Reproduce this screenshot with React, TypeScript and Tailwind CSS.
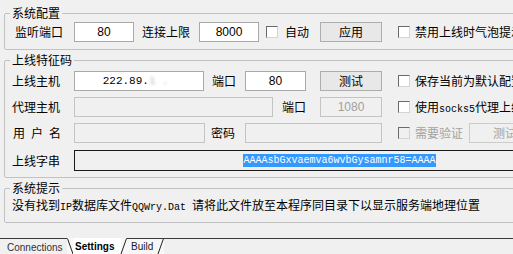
import React from 'react';

const cjk = '"Noto Sans CJK SC", "Liberation Sans", sans-serif';
const mono = '"Liberation Mono", "Noto Sans CJK SC", monospace';
const sans = '"Liberation Sans", Arial, sans-serif';

interface CheckProps {
  disabled?: boolean;
}

const Check: React.FC<CheckProps> = ({ disabled }) => (
  <span
    className={`block w-[12px] h-[12px] shrink-0 border border-t-[#6a6a6a] border-l-[#6a6a6a] border-r-[#d4d4d4] border-b-[#d4d4d4] ${
      disabled ? 'bg-[#f0f0f0]' : 'bg-white'
    }`}
  />
);

interface BoxProps {
  title: string;
  className?: string;
  children: React.ReactNode;
}

const GroupBox: React.FC<BoxProps> = ({ title, className = '', children }) => (
  <fieldset className={`ml-[4px] w-[600px] border border-[#c2c2c2] rounded-[2px] pl-[5px] ${className}`}>
    <legend className="px-[2px] text-[12px] leading-[16px] text-black">{title}</legend>
    {children}
  </fieldset>
);

const Field: React.FC<{ w: string; value?: string; disabled?: boolean }> = ({ w, value, disabled }) => (
  <div
    className={`${w} h-[20px] shrink-0 border flex items-center justify-center text-[12px] ${
      disabled ? 'bg-[#f0f0f0] border-[#c4c4c4] text-[#a0a0a0]' : 'bg-white border-[#a9a9a9] text-black'
    }`}
    style={{ fontFamily: sans }}
  >
    {value}
  </div>
);

const Btn: React.FC<{ w: string; label: string; disabled?: boolean; className?: string }> = ({ w, label, disabled, className = '' }) => (
  <div
    className={`${w} h-[20px] shrink-0 flex items-center justify-center text-[12px] border ${
      disabled ? 'border-[#cbcbcb] bg-[#f0f0f0] text-[#a3a3a3]' : 'border-[#adadad] bg-[#e8e8e8] text-black'
    } ${className}`}
  >
    {label}
  </div>
);

export default function App() {
  return (
    <div
      className="w-[513px] h-[254px] overflow-hidden bg-[#f0f0f0] flex flex-col pt-[5px] text-black"
      style={{ fontFamily: cjk }}
    >
      <GroupBox title="系统配置" className="pb-[7px]">
        <div className="flex items-center h-[20px] mt-[1px] ml-[5px] text-[12px] whitespace-nowrap">
          <span className="w-[59px] shrink-0">监听端口</span>
          <Field w="w-[60px]" value="80" />
          <span className="ml-[8px] w-[57px] shrink-0">连接上限</span>
          <Field w="w-[60px]" value="8000" />
          <span className="ml-[7px]"><Check /></span>
          <span className="ml-[7px]">自动</span>
          <Btn w="w-[62px]" label="应用" className="ml-[11px]" />
          <span className="ml-[16px]"><Check /></span>
          <span className="ml-[5px]">禁用上线时气泡提示</span>
        </div>
      </GroupBox>

      <GroupBox title="上线特征码" className="mt-[2px] pb-[6px]">
        <div className="ml-[2px] mt-[3px] flex flex-col gap-[6px] text-[12px] whitespace-nowrap">
          <div className="flex items-center h-[20px]">
            <span className="w-[62px] shrink-0">上线主机</span>
            <div
              className="w-[130px] h-[20px] shrink-0 border border-[#a9a9a9] bg-white flex items-center justify-center text-[11px]"
              style={{ fontFamily: mono }}
            >
              222.89.<span className="blur-[1.5px] text-[#b8b8b8]">1&nbsp;.&nbsp;</span>
            </div>
            <span className="ml-[8px] w-[33px] shrink-0">端口</span>
            <Field w="w-[61px]" value="80" />
            <Btn w="w-[62px]" label="测试" className="ml-[14px]" />
            <span className="ml-[16px]"><Check /></span>
            <span className="ml-[5px]">保存当前为默认配置</span>
          </div>

          <div className="flex items-center h-[20px]">
            <span className="w-[62px] shrink-0">代理主机</span>
            <Field w="w-[199px]" disabled />
            <span className="ml-[9px] w-[38px] shrink-0">端口</span>
            <Field w="w-[62px]" value="1080" disabled />
            <span className="ml-[16px]"><Check /></span>
            <span className="ml-[5px]">
              使用<span className="text-[10px]" style={{ fontFamily: mono }}>socks5</span>代理上线
            </span>
          </div>

          <div className="flex items-center h-[20px]">
            <span className="w-[62px] shrink-0 flex gap-[6px] pl-[1px]">
              <span>用</span>
              <span>户</span>
              <span>名</span>
            </span>
            <Field w="w-[131px]" disabled />
            <span className="ml-[6px] w-[34px] shrink-0">密码</span>
            <Field w="w-[137px]" disabled />
            <span className="ml-[16px]"><Check disabled /></span>
            <span className="ml-[5px] text-[#a3a3a3]">需要验证</span>
            <Btn w="w-[72px]" label="测试" disabled className="ml-[6px]" />
          </div>

          <div className="flex items-center h-[21px] mt-[1px]">
            <span className="w-[62px] shrink-0">上线字串</span>
            <div className="w-[531px] h-[21px] shrink-0 border border-[#1a1a1a] bg-[#f0f0f0] flex items-center justify-center">
              <span
                className="bg-[#3399ff] text-white text-[10px] leading-[13px]"
                style={{ fontFamily: mono }}
              >
                AAAAsbGxvaemva6wvbGysamnr58=AAAA
              </span>
            </div>
          </div>
        </div>
      </GroupBox>

      <GroupBox title="系统提示" className="mt-[2px] pb-[6px]">
        <div className="ml-[2px] mt-[1px] text-[12px] leading-[16px] whitespace-nowrap">
          没有找到<span className="text-[10px]" style={{ fontFamily: mono }}>IP</span>数据库文件
          <span className="text-[10px]" style={{ fontFamily: mono }}>QQWry.Dat </span>
          请将此文件放至本程序同目录下以显示服务端地理位置
        </div>
      </GroupBox>

      <div
        className="mt-auto h-[16px] flex items-start text-[10px] leading-[14px] bg-[#f7f7f7]"
        style={{ fontFamily: sans }}
      >
        <div className="w-[67px] h-full border-t border-[#3a3a3a] pl-[7px] pt-[2px] text-[#303030] bg-[#f0f0f0]">
          Connections
        </div>
        <svg width="7" height="16" className="shrink-0 -mr-[1px]">
          <line x1="0.5" y1="0.5" x2="6" y2="16" stroke="#202020" strokeWidth="1" />
        </svg>
        <div className="w-[48px] h-full pl-[2px] pt-[2px] font-bold text-black bg-white">Settings</div>
        <svg width="7" height="16" className="shrink-0 -ml-[1px]">
          <line x1="6.5" y1="0.5" x2="1" y2="16" stroke="#202020" strokeWidth="1" />
          <line x1="6.5" y1="0.5" x2="7" y2="0.5" stroke="#3a3a3a" strokeWidth="1" />
        </svg>
        <div className="w-[30px] h-full border-t border-[#3a3a3a] pl-[4px] pt-[1px] text-[#202020]">Build</div>
        <svg width="7" height="16" className="shrink-0">
          <line x1="6.5" y1="0.5" x2="1" y2="16" stroke="#202020" strokeWidth="1" />
          <line x1="0" y1="0.5" x2="7" y2="0.5" stroke="#3a3a3a" strokeWidth="1" />
        </svg>
        <div className="flex-1 h-full border-t border-[#3a3a3a] bg-[#f0f0f0]" />
      </div>
    </div>
  );
}
